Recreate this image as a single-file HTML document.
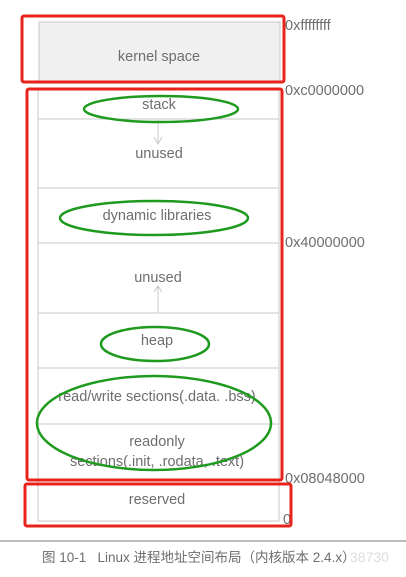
<!DOCTYPE html>
<html><head><meta charset="utf-8"><style>
body{margin:0;width:406px;height:577px;background:#fff;overflow:hidden;position:relative;font-family:"Liberation Sans","Noto Sans CJK SC",sans-serif;}
svg{position:absolute;left:0;top:0}
</style></head><body>
<svg width="406" height="577" xmlns="http://www.w3.org/2000/svg" font-family="Liberation Sans, Noto Sans CJK SC, sans-serif">
<rect x="39" y="22" width="241" height="60" fill="#f0f0f0" stroke="#c8c8c8"/>
<rect x="38" y="90" width="241" height="431" fill="#fff" stroke="#c8c8c8"/>
<g stroke="#c8c8c8">
<line x1="38" y1="119" x2="279" y2="119"/>
<line x1="38" y1="188" x2="279" y2="188"/>
<line x1="38" y1="243" x2="279" y2="243"/>
<line x1="38" y1="313" x2="279" y2="313"/>
<line x1="38" y1="368" x2="279" y2="368"/>
<line x1="38" y1="424" x2="279" y2="424"/>
<line x1="38" y1="480" x2="279" y2="480"/>
<line x1="158" y1="300" x2="158" y2="313"/>
<line x1="158" y1="120" x2="158" y2="144"/>
<polyline points="154,137 158,144 162,137" fill="none"/>
<line x1="158" y1="286" x2="158" y2="300"/>
<polyline points="154,292 158,286 162,292" fill="none"/>
</g>
<line x1="0" y1="541" x2="406" y2="541" stroke="#bbb" stroke-width="2"/>
<g fill="#6e6e6e" font-size="14.5" text-anchor="middle">
<text x="159" y="61">kernel space</text>
<text x="159" y="109">stack</text>
<text x="159" y="158">unused</text>
<text x="157" y="220">dynamic libraries</text>
<text x="158" y="282">unused</text>
<text x="157" y="345">heap</text>
<text x="157" y="401">read/write sections(.data. .bss)</text>
<text x="157" y="446">readonly</text>
<text x="157" y="466">sections(.init, .rodata, .text)</text>
<text x="157" y="504">reserved</text>
</g>
<g fill="#6e6e6e" font-size="14.5">
<text x="285" y="30">0xffffffff</text>
<text x="285" y="95">0xc0000000</text>
<text x="285" y="247">0x40000000</text>
<text x="285" y="483">0x08048000</text>
<text x="283" y="524">0</text>
</g>
<text x="42" y="562" fill="#6e6e6e" font-size="13.5">图 10-1 &#160; Linux 进程地址空间布局（内核版本 2.4.x）</text>
<text x="350" y="562" fill="#ddd" font-size="14">38730</text>
<g fill="none" stroke="#e8231b" stroke-width="3">
<rect x="22" y="16" width="262" height="66" rx="2"/>
<rect x="27" y="89" width="255" height="391" rx="2"/>
<rect x="25" y="484" width="266" height="42" rx="2"/>
</g>
<g fill="none" stroke="#1e9a1e" stroke-width="2.5">
<ellipse cx="161" cy="109" rx="77" ry="13"/>
<ellipse cx="154" cy="218" rx="94" ry="17"/>
<ellipse cx="155" cy="344" rx="54" ry="17"/>
<ellipse cx="154" cy="423" rx="117" ry="47"/>
</g>
</svg>
</body></html>
